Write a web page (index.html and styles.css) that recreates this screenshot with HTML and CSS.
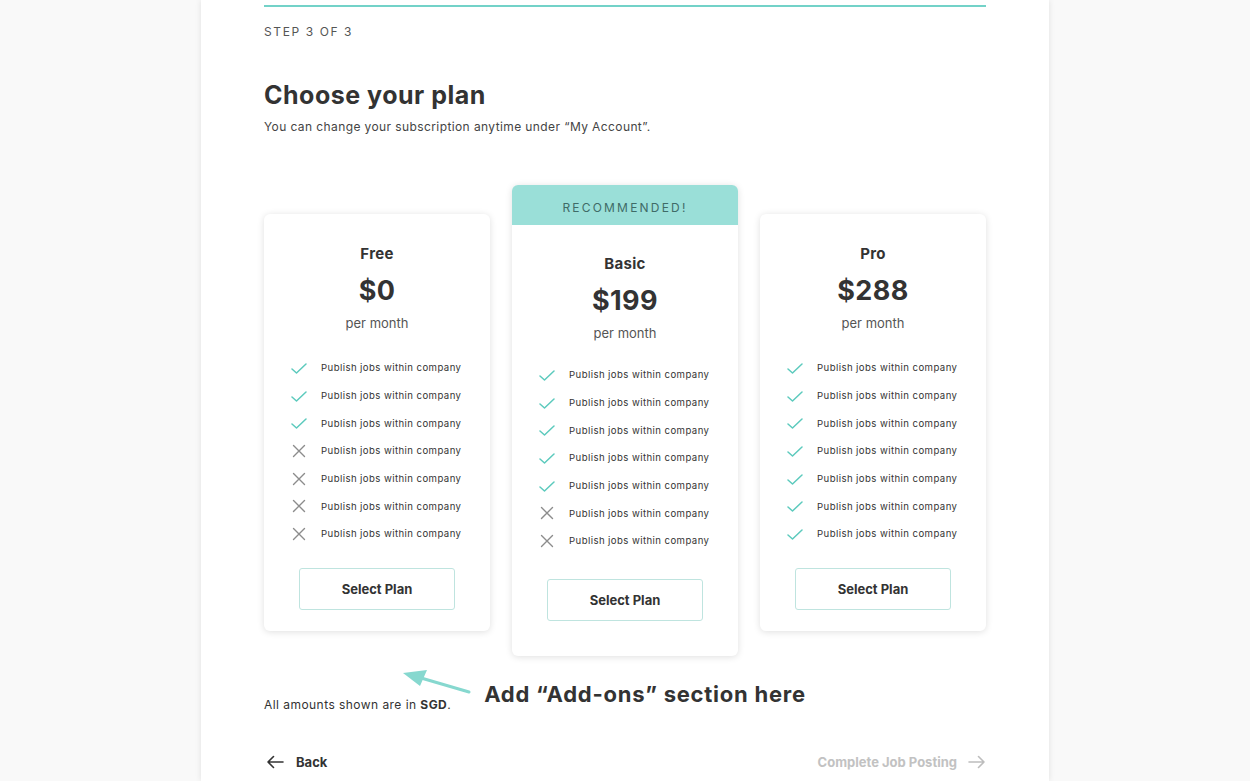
FILE: index.html
```html
<!DOCTYPE html>
<html lang="en">
<head>
<meta charset="utf-8">
<title>Choose your plan</title>
<link rel="stylesheet" href="styles.css">
</head>
<body>
<div class="panel">
  <div class="progress"></div>
  <div class="step">STEP 3 OF 3</div>
  <h1 class="title">Choose your plan</h1>
  <p class="subtitle">You can change your subscription anytime under “My Account”.</p>

  <div class="plans">
    <div class="card card-side">
      <div class="card-body">
        <div class="plan-name">Free</div>
        <div class="plan-price">$0</div>
        <div class="plan-period">per month</div>
        <ul class="features">
          <li><svg class="ic" viewBox="0 0 16 16"><path class="ok" d="M1 9 L5.5 13 L15 4"/></svg>Publish jobs within company</li>
          <li><svg class="ic" viewBox="0 0 16 16"><path class="ok" d="M1 9 L5.5 13 L15 4"/></svg>Publish jobs within company</li>
          <li><svg class="ic" viewBox="0 0 16 16"><path class="ok" d="M1 9 L5.5 13 L15 4"/></svg>Publish jobs within company</li>
          <li><svg class="ic" viewBox="0 0 16 16"><path class="no" d="M2.5 2.5 L13.5 13.5 M13.5 2.5 L2.5 13.5"/></svg>Publish jobs within company</li>
          <li><svg class="ic" viewBox="0 0 16 16"><path class="no" d="M2.5 2.5 L13.5 13.5 M13.5 2.5 L2.5 13.5"/></svg>Publish jobs within company</li>
          <li><svg class="ic" viewBox="0 0 16 16"><path class="no" d="M2.5 2.5 L13.5 13.5 M13.5 2.5 L2.5 13.5"/></svg>Publish jobs within company</li>
          <li><svg class="ic" viewBox="0 0 16 16"><path class="no" d="M2.5 2.5 L13.5 13.5 M13.5 2.5 L2.5 13.5"/></svg>Publish jobs within company</li>
        </ul>
        <button class="select">Select Plan</button>
      </div>
    </div>

    <div class="card card-featured">
      <div class="badge">RECOMMENDED!</div>
      <div class="card-body">
        <div class="plan-name">Basic</div>
        <div class="plan-price">$199</div>
        <div class="plan-period">per month</div>
        <ul class="features">
          <li><svg class="ic" viewBox="0 0 16 16"><path class="ok" d="M1 9 L5.5 13 L15 4"/></svg>Publish jobs within company</li>
          <li><svg class="ic" viewBox="0 0 16 16"><path class="ok" d="M1 9 L5.5 13 L15 4"/></svg>Publish jobs within company</li>
          <li><svg class="ic" viewBox="0 0 16 16"><path class="ok" d="M1 9 L5.5 13 L15 4"/></svg>Publish jobs within company</li>
          <li><svg class="ic" viewBox="0 0 16 16"><path class="ok" d="M1 9 L5.5 13 L15 4"/></svg>Publish jobs within company</li>
          <li><svg class="ic" viewBox="0 0 16 16"><path class="ok" d="M1 9 L5.5 13 L15 4"/></svg>Publish jobs within company</li>
          <li><svg class="ic" viewBox="0 0 16 16"><path class="no" d="M2.5 2.5 L13.5 13.5 M13.5 2.5 L2.5 13.5"/></svg>Publish jobs within company</li>
          <li><svg class="ic" viewBox="0 0 16 16"><path class="no" d="M2.5 2.5 L13.5 13.5 M13.5 2.5 L2.5 13.5"/></svg>Publish jobs within company</li>
        </ul>
        <button class="select">Select Plan</button>
      </div>
    </div>

    <div class="card card-side">
      <div class="card-body">
        <div class="plan-name">Pro</div>
        <div class="plan-price">$288</div>
        <div class="plan-period">per month</div>
        <ul class="features">
          <li><svg class="ic" viewBox="0 0 16 16"><path class="ok" d="M1 9 L5.5 13 L15 4"/></svg>Publish jobs within company</li>
          <li><svg class="ic" viewBox="0 0 16 16"><path class="ok" d="M1 9 L5.5 13 L15 4"/></svg>Publish jobs within company</li>
          <li><svg class="ic" viewBox="0 0 16 16"><path class="ok" d="M1 9 L5.5 13 L15 4"/></svg>Publish jobs within company</li>
          <li><svg class="ic" viewBox="0 0 16 16"><path class="ok" d="M1 9 L5.5 13 L15 4"/></svg>Publish jobs within company</li>
          <li><svg class="ic" viewBox="0 0 16 16"><path class="ok" d="M1 9 L5.5 13 L15 4"/></svg>Publish jobs within company</li>
          <li><svg class="ic" viewBox="0 0 16 16"><path class="ok" d="M1 9 L5.5 13 L15 4"/></svg>Publish jobs within company</li>
          <li><svg class="ic" viewBox="0 0 16 16"><path class="ok" d="M1 9 L5.5 13 L15 4"/></svg>Publish jobs within company</li>
        </ul>
        <button class="select">Select Plan</button>
      </div>
    </div>
  </div>

  <div class="footer-note">
    <p class="amounts">All amounts shown are in <strong>SGD</strong>.</p>
    <p class="annotation">Add “Add-ons” section here</p>
    <svg class="note-arrow" viewBox="0 0 72 26"><path d="M69 23 L16 7.5" /><path class="head" d="M3 4 L27 1 L20 17 Z"/></svg>
  </div>

  <div class="nav">
    <a class="back" href="#"><svg class="nav-ic" viewBox="0 0 18 14"><path d="M17 7 H2 M7.5 1.5 L2 7 L7.5 12.5"/></svg>Back</a>
    <a class="next" href="#">Complete Job Posting<svg class="nav-ic" viewBox="0 0 18 14"><path d="M1 7 H16 M10.5 1.5 L16 7 L10.5 12.5"/></svg></a>
  </div>
</div>
</body>
</html>
```

FILE: styles.css
```css
* { box-sizing: border-box; }
html, body { margin: 0; padding: 0; }
body {
  background: #f9f9f9;
  font-family: Inter, "Open Sans", Arial, sans-serif;
  color: #333;
  height: 781px;
  overflow: hidden;
}
.panel {
  width: 848px;
  margin: 0 auto;
  background: #fff;
  min-height: 781px;
  padding: 5px 63px 0;
  box-shadow: 0 0 6px rgba(0,0,0,0.10);
  position: relative;
}
.progress {
  height: 2px;
  background: #73d2c8;
}
.step {
  margin-top: 17px;
  font-size: 12px;
  line-height: 16px;
  letter-spacing: 1.6px;
  color: #555;
}
.title {
  margin: 40px 0 0;
  font-size: 25px;
  line-height: 30px;
  font-weight: 700;
  color: #333;
  letter-spacing: 0.5px;
}
.subtitle {
  margin: 9px 0 0;
  font-size: 12px;
  line-height: 16px;
  color: #444;
  letter-spacing: 0.4px;
}
.plans {
  margin-top: 50px;
  display: flex;
  justify-content: space-between;
  align-items: flex-start;
}
.card {
  width: 226px;
  background: #fff;
  border-radius: 6px;
  box-shadow: 0 1px 7px rgba(0,0,0,0.13);
  overflow: hidden;
}
.card-side { margin-top: 29px; }
.badge {
  height: 40px;
  background: #9adfd8;
  color: #3f6b67;
  font-size: 12px;
  letter-spacing: 2.2px;
  display: flex;
  align-items: center;
  justify-content: center;
  padding-top: 4px;
}
.card-body {
  display: flex;
  flex-direction: column;
  align-items: center;
  padding: 30px 0 21px;
}
.plan-name {
  font-size: 15px;
  line-height: 20px;
  font-weight: 700;
  color: #333;
  letter-spacing: 0.3px;
}
.plan-price {
  margin-top: 11px;
  font-size: 27px;
  line-height: 32px;
  font-weight: 700;
  color: #333;
  letter-spacing: 0.4px;
}
.plan-period {
  margin-top: 7px;
  font-size: 13px;
  line-height: 18px;
  color: #555;
}
.features {
  list-style: none;
  margin: 22px 0 0;
  padding: 0 0 0 27px;
  align-self: stretch;
}
.features li {
  height: 27.7px;
  display: flex;
  align-items: center;
  font-size: 9.6px;
  color: #333;
  letter-spacing: 0.42px;
}
.ic {
  width: 16px;
  height: 16px;
  margin-right: 14px;
  flex: none;
}
.ic path { fill: none; stroke-width: 1.5; stroke-linecap: round; stroke-linejoin: round; }
.ic .ok { stroke: #5ccabd; }
.ic .no { stroke: #8c8c8c; stroke-width: 1.4; }
.select {
  margin-top: 20px;
  width: 156px;
  height: 42px;
  background: #fff;
  border: 1px solid #bfe4df;
  border-radius: 3px;
  font-family: inherit;
  font-size: 13px;
  font-weight: 700;
  color: #333;
}
.card-featured .card-body { padding: 29px 0 35px; }
.card-featured .features { margin-top: 19px; }
.card-featured .select { margin-top: 24px; }

.footer-note {
  position: relative;
  display: flex;
  align-items: flex-end;
  margin-top: 14px;
  height: 50px;
}
.amounts {
  margin: 0 0 7px;
  font-size: 12px;
  line-height: 16px;
  color: #333;
  letter-spacing: 0.45px;
}
.amounts strong { font-weight: 700; }
.annotation {
  margin: 0 0 13px 33px;
  font-size: 22px;
  line-height: 26px;
  font-weight: 700;
  color: #333;
  letter-spacing: 0.75px;
}
.note-arrow {
  position: absolute;
  left: 136px;
  top: -1px;
  width: 72px;
  height: 26px;
  overflow: visible;
}
.note-arrow path { fill: none; stroke: #86d8cf; stroke-width: 3; stroke-linecap: round; }
.note-arrow .head { fill: #86d8cf; stroke: none; }

.nav {
  margin-top: 34px;
  display: flex;
  justify-content: space-between;
  align-items: center;
}
.nav a {
  display: flex;
  align-items: center;
  text-decoration: none;
  font-size: 13px;
  font-weight: 700;
}
.back { color: #333; }
.back .nav-ic { margin-right: 12px; stroke: #333; }
.next { color: #c2c2c2; }
.next .nav-ic { margin-left: 11px; stroke: #bdbdbd; }
.nav-ic { width: 18px; height: 14px; fill: none; stroke-width: 1.6; stroke-linecap: round; stroke-linejoin: round; margin-left: 2px; }
```
